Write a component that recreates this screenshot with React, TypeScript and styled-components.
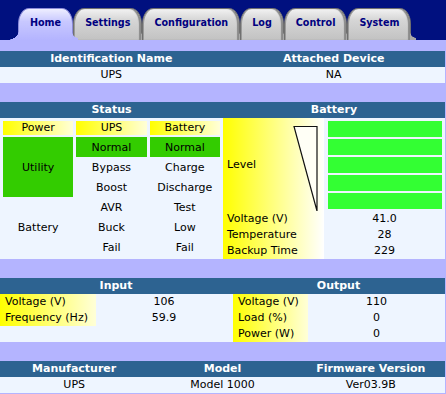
import styled, { createGlobalStyle, css } from 'styled-components';

const GlobalStyle = createGlobalStyle`
  html, body {
    margin: 0;
    padding: 0;
    background: #b4b4ff;
  }
  body {
    font-family: 'DejaVu Sans', Verdana, sans-serif;
    font-size: 11px;
    color: #000;
  }
`;

const tabs = ['Home', 'Settings', 'Configuration', 'Log', 'Control', 'System'];

const App = () => {
  return (
    <Page>
      <GlobalStyle />
      <TabBar>
        {tabs.map((t) => (
          <Tab key={t} $active={t === 'Home'}>
            {t}
          </Tab>
        ))}
      </TabBar>

      <Main>
        <Section>
          <HeadRow $cols="1fr 1fr">
            <HeadCell>Identification Name</HeadCell>
            <HeadCell>Attached Device</HeadCell>
          </HeadRow>
          <DataRow $cols="1fr 1fr">
            <Cell>UPS</Cell>
            <Cell>NA</Cell>
          </DataRow>
        </Section>

        <Section>
          <HeadRow $cols="223px 1fr">
            <HeadCell>Status</HeadCell>
            <HeadCell>Battery</HeadCell>
          </HeadRow>
          <Split $cols="223px 1fr">
            <StatusGrid>
              <StatusHead>Power</StatusHead>
              <StatusHead>UPS</StatusHead>
              <StatusHead>Battery</StatusHead>
              <StatusCell $green $span={3}>Utility</StatusCell>
              <StatusCell $green>Normal</StatusCell>
              <StatusCell $green>Normal</StatusCell>
              <StatusCell>Bypass</StatusCell>
              <StatusCell>Charge</StatusCell>
              <StatusCell>Boost</StatusCell>
              <StatusCell>Discharge</StatusCell>
              <StatusCell $span={3}>Battery</StatusCell>
              <StatusCell>AVR</StatusCell>
              <StatusCell>Test</StatusCell>
              <StatusCell>Buck</StatusCell>
              <StatusCell>Low</StatusCell>
              <StatusCell>Fail</StatusCell>
              <StatusCell>Fail</StatusCell>
            </StatusGrid>

            <BatteryGrid>
              <LevelCell>
                <span>Level</span>
                <LevelGauge width="25" height="85" viewBox="0 0 25 85">
                  <polygon
                    points="1,0.5 24,0.5 24,85"
                    fill="#fffff6"
                    stroke="#111"
                    strokeWidth="1.2"
                  />
                </LevelGauge>
              </LevelCell>
              <Bars>
                {[0, 1, 2, 3, 4].map((i) => (
                  <Bar key={i} />
                ))}
              </Bars>
              <BattLabel>Voltage (V)</BattLabel>
              <Value>41.0</Value>
              <BattLabel>Temperature</BattLabel>
              <Value>28</Value>
              <BattLabel>Backup Time</BattLabel>
              <Value>229</Value>
            </BatteryGrid>
          </Split>
        </Section>

        <Section>
          <HeadRow $cols="232px 1fr">
            <HeadCell>Input</HeadCell>
            <HeadCell>Output</HeadCell>
          </HeadRow>
          <Split $cols="232px 1fr">
            <MeasureGrid $label="96px">
              <MeasureLabel>Voltage (V)</MeasureLabel>
              <Value>106</Value>
              <MeasureLabel>Frequency (Hz)</MeasureLabel>
              <Value>59.9</Value>
            </MeasureGrid>
            <MeasureGrid $label="75px" $indent>
              <MeasureLabel>Voltage (V)</MeasureLabel>
              <Value>110</Value>
              <MeasureLabel>Load (%)</MeasureLabel>
              <Value>0</Value>
              <MeasureLabel>Power (W)</MeasureLabel>
              <Value>0</Value>
            </MeasureGrid>
          </Split>
        </Section>

        <Section>
          <HeadRow $cols="1fr 1fr 1fr">
            <HeadCell>Manufacturer</HeadCell>
            <HeadCell>Model</HeadCell>
            <HeadCell>Firmware Version</HeadCell>
          </HeadRow>
          <DataRow $cols="1fr 1fr 1fr">
            <Cell>UPS</Cell>
            <Cell>Model 1000</Cell>
            <Cell>Ver03.9B</Cell>
          </DataRow>
        </Section>
      </Main>
    </Page>
  );
};

const Page = styled.div`
  width: 446px;
  height: 394px;
  overflow: hidden;
`;

const TabBar = styled.div`
  display: flex;
  align-items: flex-end;
  height: 40px;
  padding-left: 18px;
  background: #00107f;
`;

const Tab = styled.div<{ $active?: boolean }>`
  position: relative;
  display: flex;
  align-items: center;
  height: 32px;
  box-sizing: border-box;
  padding: 0 11px 4px;
  font-size: 9.6px;
  font-weight: bold;
  color: #000080;
  white-space: nowrap;
  border: 1px solid #707070;
  border-bottom: none;
  border-radius: 11px 11px 0 0 / 16px 16px 0 0;
  background: linear-gradient(#f2f2f2 0%, #d6d6d6 35%, #c2c2c2 100%);
  box-shadow: inset 1px 0 0 #9a9a9a, inset -2px 0 1px #8a8a8a;

  &::after {
    content: '';
    position: absolute;
    right: -6px;
    bottom: 0;
    width: 6px;
    height: 8px;
    background: radial-gradient(circle at 100% 0, transparent 5.5px, #a8a8a8 6px);
  }

  ${({ $active }) =>
    $active &&
    css`
      z-index: 2;
      border-color: #8c8cd8;
      background: linear-gradient(#eeeeff 0%, #c8c8ff 40%, #b4b4ff 100%);
      box-shadow: none;

      &::after {
        background: radial-gradient(circle at 100% 0, transparent 5.5px, #b4b4ff 6px);
      }
      &::before {
        content: '';
        position: absolute;
        left: -12px;
        bottom: 0;
        width: 12px;
        height: 10px;
        background: radial-gradient(ellipse 12px 10px at 0 0, transparent 98%, #b4b4ff 100%);
      }
    `}
`;

const Main = styled.div`
  display: flex;
  flex-direction: column;
  gap: 19px;
  margin-right: 1px;
  padding-top: 11px;
`;

const Section = styled.div`
  display: flex;
  flex-direction: column;
  background: #eef5ff;
`;

const HeadRow = styled.div<{ $cols: string }>`
  display: grid;
  grid-template-columns: ${({ $cols }) => $cols};
  height: 16px;
  background: #2d6391;
`;

const HeadCell = styled.div`
  text-align: center;
  line-height: 16px;
  font-weight: bold;
  color: #fff;
`;

const DataRow = styled.div<{ $cols: string }>`
  display: grid;
  grid-template-columns: ${({ $cols }) => $cols};
  height: 16px;
`;

const Cell = styled.div`
  text-align: center;
  line-height: 16px;
`;

const Split = styled.div<{ $cols: string }>`
  display: grid;
  grid-template-columns: ${({ $cols }) => $cols};
`;

const StatusGrid = styled.div`
  display: grid;
  grid-template-columns: repeat(3, 1fr);
  grid-template-rows: 16px repeat(6, 20px);
  column-gap: 3px;
  padding: 3px 3px 2px;
`;

const yellowFade = 'linear-gradient(to right, #ffff00 0%, #ffffd8 100%)';

const StatusHead = styled.div`
  align-self: start;
  height: 14px;
  line-height: 14px;
  text-align: center;
  background: ${yellowFade};
`;

const StatusCell = styled.div<{ $green?: boolean; $span?: number }>`
  display: flex;
  align-items: center;
  justify-content: center;
  grid-row: span ${({ $span }) => $span ?? 1};
  background: ${({ $green }) => ($green ? '#33cc00' : 'transparent')};
`;

const BatteryGrid = styled.div`
  display: grid;
  grid-template-columns: 101px 1fr;
  grid-template-rows: 93px repeat(3, 16px);
`;

const whiteFade = 'linear-gradient(to right, #ffff00 0%, #ffffff 100%)';

const LevelCell = styled.div`
  display: flex;
  align-items: center;
  justify-content: space-between;
  padding: 0 6px 0 4px;
  background: ${whiteFade};
`;

const LevelGauge = styled.svg`
  align-self: flex-end;
  display: block;
`;

const Bars = styled.div`
  display: flex;
  flex-direction: column;
  gap: 2px;
  padding: 3px 3px 0 4px;
`;

const Bar = styled.div`
  height: 16px;
  background: #33ff33;
`;

const BattLabel = styled.div`
  padding-left: 4px;
  line-height: 16px;
  background: ${whiteFade};
`;

const Value = styled.div`
  text-align: center;
  line-height: 16px;
`;

const MeasureGrid = styled.div<{ $label: string; $indent?: boolean }>`
  display: grid;
  grid-template-columns: ${({ $label }) => $label} 1fr;
  grid-template-rows: repeat(3, 16px);
  padding-left: ${({ $indent }) => ($indent ? '1px' : '0')};
`;

const MeasureLabel = styled.div`
  padding-left: 5px;
  line-height: 16px;
  white-space: nowrap;
  background: ${yellowFade};
`;

export default App;
